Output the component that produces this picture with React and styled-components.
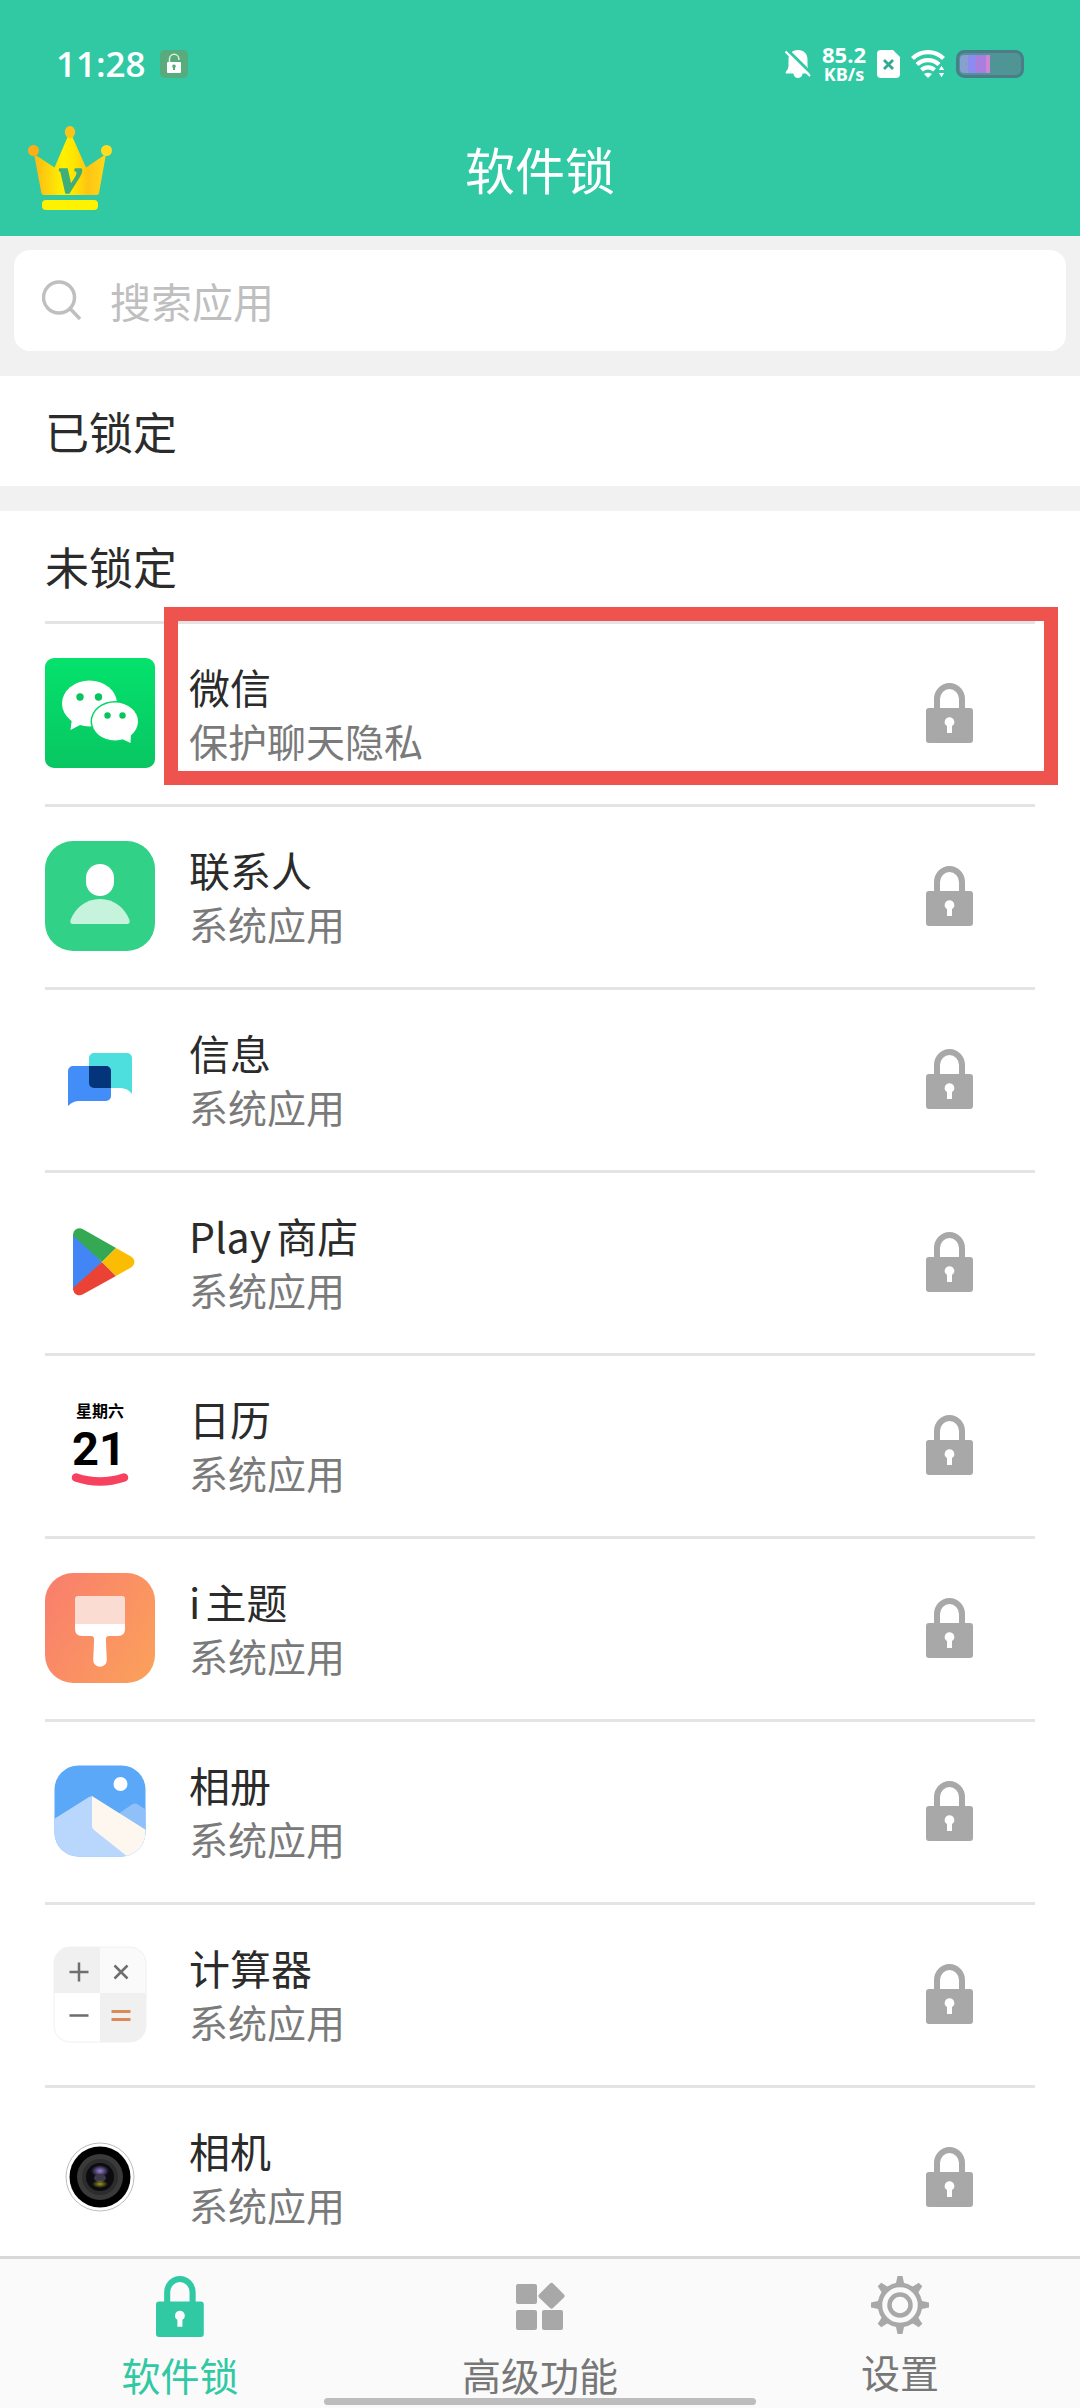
import React, { useState } from "react";
import styled, { createGlobalStyle } from "styled-components";

const GlobalStyle = createGlobalStyle`
  * {
    box-sizing: border-box;
  }

  body {
    margin: 0;
    background: #f1f1f1;
    font-family: "Noto Sans CJK SC", "Noto Sans", sans-serif;
    text-autospace: normal;
  }

  button,
  input {
    font-family: inherit;
  }
`;

const Page = styled.div`
  display: flex;
  flex-direction: column;
  height: 100vh;
`;

const Header = styled.header`
  flex: none;
  background: #30c9a4;
  color: #fff;
`;

const StatusBar = styled.div`
  display: flex;
  align-items: center;
  justify-content: space-between;
  height: 100px;
  padding: 28px 56px 0 56px;
  font-family: "Open Sans", "Noto Sans", sans-serif;
  font-weight: 700;
`;

const StatusGroup = styled.div`
  display: flex;
  align-items: center;
  gap: ${(props) => props.$gap}px;
`;

const Clock = styled.span`
  font-size: 35px;
  font-weight: 600;
  line-height: 40px;
`;

const NetSpeed = styled.div`
  display: flex;
  flex-direction: column;
  align-items: center;
  line-height: 20px;
`;

const SpeedValue = styled.span`
  font-size: 22px;
`;

const SpeedUnit = styled.span`
  font-size: 18px;
`;

const TitleBar = styled.div`
  display: grid;
  grid-template-columns: 84px 1fr 84px;
  align-items: center;
  height: 136px;
  padding: 0 28px;
`;

const PlainButton = styled.button`
  display: flex;
  padding: 0;
  border: none;
  background: none;
  cursor: pointer;
`;

const Title = styled.h1`
  margin: 0;
  font-size: 50px;
  font-weight: 400;
  line-height: 72px;
  text-align: center;
`;

const Content = styled.main`
  flex: 1;
  min-height: 0;
  overflow-y: auto;
  scrollbar-width: none;
`;

const SearchBox = styled.label`
  display: flex;
  align-items: center;
  gap: 28px;
  height: 101px;
  margin: 14px 14px 25px;
  padding: 0 28px 2px;
  border-radius: 16px;
  background: #fff;
`;

const SearchInput = styled.input`
  flex: 1;
  min-width: 0;
  padding: 0;
  border: none;
  outline: none;
  background: none;
  color: #2b2b2b;
  font-size: 41px;
  line-height: 60px;

  &::placeholder {
    color: #bfbfbf;
    opacity: 1;
  }
`;

const Section = styled.section`
  margin-bottom: 25px;
  padding: 0 45px;
  background: #fff;
`;

const SectionTitle = styled.h2`
  margin: 0;
  color: #2b2b2b;
  font-size: 44px;
  font-weight: 400;
  line-height: 110px;
`;

const AppList = styled.ul`
  margin: 0;
  padding: 0;
  list-style: none;
`;

const AppRow = styled.li`
  position: relative;
  display: flex;
  align-items: center;
  gap: 34px;
  height: 183px;
  padding: 0 62px 3px 0;
  border-top: 3px solid #e4e4e4;
`;

const AppText = styled.div`
  flex: 1;
`;

const AppName = styled.div`
  color: #2b2b2b;
  font-size: 41px;
  line-height: 54px;
`;

const AppNote = styled.div`
  color: #7a7a7a;
  font-size: 39px;
  line-height: 54px;
`;

// marks the row the guide is talking about
const Highlight = styled.div`
  position: absolute;
  top: -17px;
  right: -23px;
  bottom: 19px;
  left: 119px;
  border: 14px solid #ef534d;
  pointer-events: none;
`;

const TabBar = styled.nav`
  position: relative;
  flex: none;
  display: grid;
  grid-template-columns: repeat(3, 1fr);
  height: 152px;
  border-top: 3px solid #d9d9d9;
  background: #fafafa;
`;

const Tab = styled.button`
  display: flex;
  flex-direction: column;
  align-items: center;
  gap: 9px;
  padding: 17px 0 0;
  border: none;
  background: none;
  color: ${(props) => (props.$active ? "#30c9a4" : "#a8a8a8")};
  cursor: pointer;
`;

const TabLabel = styled.span`
  color: ${(props) => (props.$active ? "#30c9a4" : "#777")};
  font-size: 39px;
  line-height: 56px;
`;

const HomeIndicator = styled.div`
  position: absolute;
  bottom: 3px;
  left: 30%;
  width: 40%;
  height: 7px;
  border-radius: 4px;
  background: #bdbdbd;
`;

const LockIcon = ({ size = 60, color = "currentColor" }) => (
  <svg width={(size * 47) / 60} height={size} viewBox="0 0 47 60">
    <path
      d="M11 27V16a12.5 13 0 0 1 25 0v11"
      fill="none"
      stroke={color}
      strokeWidth="6"
    />
    <path
      fill={color}
      fillRule="evenodd"
      d="M3 25h41a3 3 0 0 1 3 3v29a3 3 0 0 1-3 3H3a3 3 0 0 1-3-3V28a3 3 0 0 1 3-3zM23.5 34.2a4.8 4.8 0 0 0-2.5 8.9V50h5v-6.9a4.8 4.8 0 0 0-2.5-8.9z"
    />
  </svg>
);

const GridIcon = () => (
  <svg width="50" height="61" viewBox="0 0 50 61" fill="currentColor">
    <rect x="1" y="8" width="21" height="20" rx="2" />
    <rect x="1" y="34" width="21" height="20" rx="2" />
    <rect x="27" y="34" width="21" height="20" rx="2" />
    <path d="M35 7.4q1.5-1.5 3 0L49 18.5q1.200 1.5 0 3L38 32q-1.5 1.5-3 0L24 21.5q-1.200-1.5 0-3z" />
  </svg>
);

const GearIcon = () => (
  <svg width="58" height="58" viewBox="0 0 58 58" fill="currentColor">
    {[0, 45, 90, 135, 180, 225, 270, 315].map((angle) => (
      <path
        key={angle}
        d="M26.5 0h5l1.5 7 3 3H22l3-3z"
        transform={`rotate(${angle} 29 29)`}
      />
    ))}
    <circle cx="29" cy="29" r="20" fill="#fafafa" stroke="currentColor" strokeWidth="4.5" />
    <circle cx="29" cy="29" r="10.5" fill="none" stroke="currentColor" strokeWidth="4.5" />
  </svg>
);

const SearchIcon = () => (
  <svg width="40" height="40" viewBox="0 0 40 40" fill="none" stroke="#bfbfbf">
    <circle cx="17" cy="17.5" r="15.5" strokeWidth="3.5" />
    <path d="M28.5 29 38 39" strokeWidth="3.5" />
  </svg>
);

const CrownIcon = () => (
  <svg width="84" height="84" viewBox="0 0 84 84">
    <defs>
      <linearGradient id="crown" x1="0" x2="1">
        <stop offset="0" stopColor="#fbb817" />
        <stop offset="0.4" stopColor="#fff000" />
        <stop offset="0.55" stopColor="#ffe600" />
        <stop offset="0.75" stopColor="#fdc413" />
        <stop offset="1" stopColor="#ffd91a" />
      </linearGradient>
    </defs>
    <path
      fill="url(#crown)"
      d="M6 28 26.5 41.5 40 10h4l14 31.5L78 28 71 67q-.4 2-2.4 2H15.8q-2 0-2.4-2z"
    />
    <ellipse cx="42" cy="6" rx="5.2" ry="6" fill="#fdc316" />
    <circle cx="5.5" cy="24.5" r="5.5" fill="#fbae17" />
    <circle cx="78.5" cy="24.5" r="5.5" fill="#ffdd1e" />
    <rect x="14" y="74" width="56" height="10" rx="4" fill="#fff200" />
    <text
      x="42"
      y="66"
      textAnchor="middle"
      fill="#3fae7a"
      stroke="#3fae7a"
      strokeWidth="1.5"
      fontFamily="Liberation Serif, serif"
      fontSize="50"
      fontStyle="italic"
      fontWeight="700"
    >
      v
    </text>
  </svg>
);

const LockBadge = () => (
  <svg width="28" height="28" viewBox="0 0 28 28">
    <rect width="28" height="28" rx="5" fill="#58ab7c" />
    <path d="M9.5 12V9a4.7 4.7 0 0 1 9.4 0v1" fill="none" stroke="#dff3d6" strokeWidth="1.5" />
    <rect x="7" y="12" width="14" height="11" rx="1" fill="#fff" />
    <path d="M14 14.5a1.8 1.8 0 0 1 1 3.3V20h-2v-2.200a1.8 1.8 0 0 1 1-3.3z" fill="#58ab7c" />
  </svg>
);

const MutedBell = () => (
  <svg width="26" height="28" viewBox="0 0 26 28">
    <path
      fill="#fff"
      d="M13 0c6 0 9.5 4 9.5 9.5V16q0 3 3 6v1.5h-8a4.5 4.5 0 0 1-9 0H.8V22q2.7-3 2.7-6V9.5C3.5 4 7 0 13 0z"
    />
    <path d="M2-.5 27 24" stroke="#30c9a4" strokeWidth="3" />
    <path d="M.5 1.5 25 26" stroke="#fff" strokeWidth="2.2" />
  </svg>
);

const SimIcon = () => (
  <svg width="23" height="28" viewBox="0 0 23 28">
    <path fill="#fff" d="M4 0h12l7 7v17a4 4 0 0 1-4 4H4a4 4 0 0 1-4-4V4a4 4 0 0 1 4-4z" />
    <path d="m7 10 9 9M16 10l-9 9" stroke="#30a98f" strokeWidth="2.8" />
  </svg>
);

const WifiIcon = () => (
  <svg width="34" height="28" viewBox="0 0 34 28">
    <g fill="none" stroke="#fff" strokeWidth="4.2">
      <path d="M1.5 8.5a22 22 0 0 1 31 0" />
      <path d="M6 14.5a16 16 0 0 1 22 0" />
      <path d="M10.5 20a9.5 9.5 0 0 1 13 0" />
    </g>
    <path d="M13 24q4-2.5 8 0L17 28z" fill="#fff" />
    <path d="M27 20.5 30.5 15l3.5 5.5zM27 22.5h7L30.5 28z" fill="#fff" stroke="#30c9a4" strokeWidth="1" />
  </svg>
);

const BatteryIcon = () => (
  <svg width="68" height="28" viewBox="0 0 68 28">
    <rect x="1.5" y="1.5" width="65" height="25" rx="7" fill="#4f9595" stroke="#4a7d87" strokeWidth="3" />
    <path d="M12 5v18H8a4 4 0 0 1-4-4V9a4 4 0 0 1 4-4z" fill="#86a0cf" />
    <rect x="12" y="5" width="8" height="18" fill="#8d8af0" />
    <rect x="20" y="5" width="10" height="18" fill="#a87fdc" />
    <rect x="30" y="5" width="4" height="18" fill="#d184d6" />
  </svg>
);

const AppIcon = ({ children }) => (
  <svg width="110" height="110" viewBox="0 0 110 110">
    {children}
  </svg>
);

const WeChatIcon = () => (
  <AppIcon>
    <defs>
      <linearGradient id="wechat" x1="0" y1="0" x2="0" y2="1">
        <stop offset="0" stopColor="#04e26c" />
        <stop offset="1" stopColor="#08c662" />
      </linearGradient>
    </defs>
    <rect width="110" height="110" rx="9" fill="url(#wechat)" />
    <ellipse cx="44.5" cy="45.5" rx="27.5" ry="23" fill="#fff" />
    <path d="M27 60 25.5 72 37 66z" fill="#fff" />
    <circle cx="35" cy="39" r="3.7" fill="#07c45f" />
    <circle cx="53.5" cy="39" r="3.7" fill="#07c45f" />
    <ellipse cx="70" cy="63.5" rx="24.5" ry="20.5" fill="#06d365" />
    <ellipse cx="70" cy="63.5" rx="23" ry="19" fill="#fff" />
    <path d="M86 74 85.5 85 75 80z" fill="#fff" />
    <circle cx="62.5" cy="57.5" r="3.2" fill="#07c45f" />
    <circle cx="77.5" cy="57.5" r="3.2" fill="#07c45f" />
  </AppIcon>
);

const ContactsIcon = () => (
  <AppIcon>
    <rect width="110" height="110" rx="28" fill="#31d187" />
    <rect x="41" y="23" width="28" height="32" rx="14" fill="#fff" />
    <path d="M28 83q-3.5 0-2.5-4C30 67 41 58 55 58s25 9 29.5 21q1 4-2.5 4z" fill="#c5f3dc" />
  </AppIcon>
);

const MessagesIcon = () => (
  <AppIcon>
    <path d="M49 29h33a5 5 0 0 1 5 5v36q-4-6-12-6H49a5 5 0 0 1-5-5V34a5 5 0 0 1 5-5z" fill="#4ddfdd" />
    <path d="M28 42h33a5 5 0 0 1 5 5v25a5 5 0 0 1-5 5H34q-6 0-11 5V47a5 5 0 0 1 5-5z" fill="#438df8" />
    <path d="M44 42h17a5 5 0 0 1 5 5v17H49a5 5 0 0 1-5-5z" fill="#04357a" />
  </AppIcon>
);

const PlayIcon = () => (
  <AppIcon>
    <path d="M28 28v54l2 2 27-29-27-29z" fill="#4285f4" />
    <path d="M28 28.5c0-6 5-9 10-6.3L71 41 57 55z" fill="#34a853" />
    <path d="M28 81c0 6 5 9 10 6.3L71 69 57 55z" fill="#ea4335" />
    <path d="M71 41l15 8.5c4.5 3 4.5 8 0 11L71 69 57 55z" fill="#fbbc04" />
  </AppIcon>
);

const CalendarIcon = () => (
  <AppIcon>
    <g fill="#000" fontWeight="700" textAnchor="middle">
      <text x="55" y="27" fontSize="16">
        星期六
      </text>
      <text x="54" y="75" fontSize="47" fontFamily="Roboto, sans-serif">
        21
      </text>
    </g>
    <path d="M31 87.5q24 8 48 0" fill="none" stroke="#f6425f" strokeWidth="8.5" strokeLinecap="round" />
  </AppIcon>
);

const ThemeIcon = () => (
  <AppIcon>
    <defs>
      <linearGradient id="theme" x1="0" y1="0.2" x2="1" y2="0.8">
        <stop offset="0" stopColor="#f9806c" />
        <stop offset="1" stopColor="#fb9f5c" />
      </linearGradient>
    </defs>
    <rect width="110" height="110" rx="28" fill="url(#theme)" />
    <path d="M33 23h44a3 3 0 0 1 3 3v26H30V26a3 3 0 0 1 3-3z" fill="#fbdcd3" />
    <path d="M30 51h50v5q0 7-7 7h-9q-3 0-3 3v3l.8 18a6.8 6.8 0 0 1-13.6 0L49 69v-3q0-3-3-3h-9q-7 0-7-7z" fill="#fff" />
  </AppIcon>
);

const GalleryIcon = () => (
  <AppIcon>
    <defs>
      <clipPath id="gallery">
        <rect x="9.5" y="9.5" width="91" height="91" rx="24" />
      </clipPath>
    </defs>
    <g clipPath="url(#gallery)">
      <rect x="9" y="9" width="92" height="92" fill="#5aa8f7" />
      <circle cx="75.5" cy="28" r="7" fill="#fff" />
      <path d="M70 60 87 48.5q3-2 6 0l9 6V80z" fill="#8fc0fa" />
      <path d="M9 63 44 41q3-1.5 4 0v29l38 31H9z" fill="#b9d6fc" />
      <path d="M47 40 101 74v27H83L49 74q-2-1.5-2-4z" fill="#fdf7f0" />
    </g>
  </AppIcon>
);

const CalculatorIcon = () => (
  <AppIcon>
    <defs>
      <clipPath id="calculator">
        <rect x="9" y="8" width="92" height="95" rx="16" />
      </clipPath>
    </defs>
    <g clipPath="url(#calculator)">
      <rect x="9" y="8" width="46" height="46" fill="#f0f0f0" />
      <rect x="55" y="8" width="46" height="46" fill="#fafafa" />
      <rect x="9" y="54" width="46" height="49" fill="#fff" />
      <rect x="55" y="54" width="46" height="49" fill="#f0f0f0" />
    </g>
    <rect x="9" y="8" width="92" height="95" rx="16" fill="none" stroke="#f0f0f0" />
    <path d="M24.5 33h19M34 23.5v19M69.5 26.5l13 13M82.5 26.5l-13 13M24.5 76.5h19" stroke="#6e6e6e" strokeWidth="2.5" />
    <path d="M66.5 72.5h19M66.5 80.5h19" stroke="#d98a56" strokeWidth="2.8" />
  </AppIcon>
);

const CameraIcon = () => (
  <AppIcon>
    <defs>
      <radialGradient id="lensTop">
        <stop offset="0" stopColor="#9c83d6" />
        <stop offset="1" stopColor="#9c83d6" stopOpacity="0" />
      </radialGradient>
      <radialGradient id="lensBottom">
        <stop offset="0" stopColor="#a09a1e" />
        <stop offset="1" stopColor="#a09a1e" stopOpacity="0" />
      </radialGradient>
    </defs>
    <circle cx="55" cy="55" r="34" fill="#fff" stroke="#bdbdbd" />
    <circle cx="55" cy="55" r="30.5" fill="#000" />
    <circle cx="55" cy="55" r="23" fill="#3a3a3a" />
    <circle cx="55" cy="55" r="18" fill="#2c2c2c" />
    <circle cx="55" cy="55" r="14" fill="#0b0b10" />
    <ellipse cx="55" cy="49" rx="9" ry="6" fill="url(#lensTop)" />
    <ellipse cx="55" cy="56" rx="6" ry="4" fill="#3b3a48" />
    <ellipse cx="55" cy="62" rx="8" ry="4" fill="url(#lensBottom)" />
  </AppIcon>
);

const apps = [
  { name: "微信", note: "保护聊天隐私", icon: <WeChatIcon />, highlighted: true },
  { name: "联系人", note: "系统应用", icon: <ContactsIcon /> },
  { name: "信息", note: "系统应用", icon: <MessagesIcon /> },
  { name: "Play商店", note: "系统应用", icon: <PlayIcon /> },
  { name: "日历", note: "系统应用", icon: <CalendarIcon /> },
  { name: "i主题", note: "系统应用", icon: <ThemeIcon /> },
  { name: "相册", note: "系统应用", icon: <GalleryIcon /> },
  { name: "计算器", note: "系统应用", icon: <CalculatorIcon /> },
  { name: "相机", note: "系统应用", icon: <CameraIcon /> },
];

const tabs = [
  { name: "软件锁", icon: <LockIcon size={61} /> },
  { name: "高级功能", icon: <GridIcon /> },
  { name: "设置", icon: <GearIcon /> },
];

function App() {
  const [query, setQuery] = useState("");
  const [activeTab, setActiveTab] = useState("软件锁");

  const visibleApps = apps.filter((app) => app.name.includes(query));

  return (
    <Page>
      <GlobalStyle />
      <Header>
        <StatusBar>
          <StatusGroup $gap={14}>
            <Clock>11:28</Clock>
            <LockBadge />
          </StatusGroup>
          <StatusGroup $gap={11}>
            <MutedBell />
            <NetSpeed>
              <SpeedValue>85.2</SpeedValue>
              <SpeedUnit>KB/s</SpeedUnit>
            </NetSpeed>
            <SimIcon />
            <WifiIcon />
            <BatteryIcon />
          </StatusGroup>
        </StatusBar>
        <TitleBar>
          <PlainButton aria-label="VIP">
            <CrownIcon />
          </PlainButton>
          <Title>软件锁</Title>
        </TitleBar>
      </Header>

      <Content>
        <SearchBox>
          <SearchIcon />
          <SearchInput
            type="text"
            aria-label="搜索应用"
            placeholder="搜索应用"
            value={query}
            onChange={(e) => setQuery(e.target.value)}
          />
        </SearchBox>

        <Section>
          <SectionTitle>已锁定</SectionTitle>
        </Section>

        <Section>
          <SectionTitle>未锁定</SectionTitle>
          <AppList>
            {visibleApps.map((app) => (
              <AppRow key={app.name}>
                {app.icon}
                <AppText>
                  <AppName>{app.name}</AppName>
                  <AppNote>{app.note}</AppNote>
                </AppText>
                <PlainButton aria-label={app.name}>
                  <LockIcon color="#a8a8a8" />
                </PlainButton>
                {app.highlighted && <Highlight />}
              </AppRow>
            ))}
          </AppList>
        </Section>
      </Content>

      <TabBar>
        {tabs.map((tab) => (
          <Tab
            key={tab.name}
            $active={tab.name === activeTab}
            onClick={() => setActiveTab(tab.name)}
          >
            {tab.icon}
            <TabLabel $active={tab.name === activeTab}>{tab.name}</TabLabel>
          </Tab>
        ))}
        <HomeIndicator />
      </TabBar>
    </Page>
  );
}

export default App;
